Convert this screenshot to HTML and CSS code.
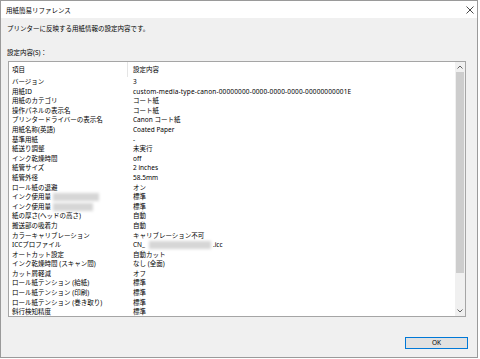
FILE: index.html
```html
<!DOCTYPE html>
<html lang="ja">
<head>
    <meta charset="utf-8">
    <link rel="stylesheet" href="styles.css">
</head>
<body>
    <div class="dialog">
        <div class="titlebar">
            <span class="title">用紙簡易リファレンス</span>
            <svg class="close" width="8" height="8" viewBox="0 0 8 8">
                <path d="M0.5 0.5 L7.5 7.5 M7.5 0.5 L0.5 7.5" stroke="#333" stroke-width="0.9" fill="none" />
            </svg>
        </div>

        <div class="content">
            <p class="desc">プリンターに反映する用紙情報の設定内容です。</p>
            <div class="caption">設定内容(S)：</div>

            <div class="list">
                <div class="rows">
                    <div class="row head"><span>項目</span><span class="val">設定内容</span></div>
                    <div class="row"><span>バージョン</span><span class="val">3</span></div>
                    <div class="row"><span>用紙ID</span><span class="val id">custom-media-type-canon-00000000-0000-0000-0000-00000000001E</span></div>
                    <div class="row"><span>用紙のカテゴリ</span><span class="val">コート紙</span></div>
                    <div class="row"><span>操作パネルの表示名</span><span class="val">コート紙</span></div>
                    <div class="row"><span>プリンタードライバーの表示名</span><span class="val">Canon コート紙</span></div>
                    <div class="row"><span>用紙名称(英語)</span><span class="val">Coated Paper</span></div>
                    <div class="row"><span>基準用紙</span><span class="val">-</span></div>
                    <div class="row"><span>紙送り調整</span><span class="val">未実行</span></div>
                    <div class="row"><span>インク乾燥時間</span><span class="val">off</span></div>
                    <div class="row"><span>紙管サイズ</span><span class="val">2 inches</span></div>
                    <div class="row"><span>紙管外径</span><span class="val">58.5mm</span></div>
                    <div class="row"><span>ロール紙の退避</span><span class="val">オン</span></div>
                    <div class="row"><span>インク使用量<i class="blur w1"></i></span><span class="val">標準</span></div>
                    <div class="row"><span>インク使用量<i class="blur w2"></i></span><span class="val">標準</span></div>
                    <div class="row"><span>紙の厚さ(ヘッドの高さ)</span><span class="val">自動</span></div>
                    <div class="row"><span>搬送部の吸着力</span><span class="val">自動</span></div>
                    <div class="row"><span>カラーキャリブレーション</span><span class="val">キャリブレーション不可</span></div>
                    <div class="row"><span>ICCプロファイル</span><span class="val">CN_<i class="blur w3"></i>.icc</span></div>
                    <div class="row"><span>オートカット設定</span><span class="val">自動カット</span></div>
                    <div class="row"><span>インク乾燥時間 (スキャン間)</span><span class="val">なし (全面)</span></div>
                    <div class="row"><span>カット屑軽減</span><span class="val">オフ</span></div>
                    <div class="row"><span>ロール紙テンション (給紙)</span><span class="val">標準</span></div>
                    <div class="row"><span>ロール紙テンション (印刷)</span><span class="val">標準</span></div>
                    <div class="row"><span>ロール紙テンション (巻き取り)</span><span class="val">標準</span></div>
                    <div class="row"><span>斜行検知精度</span><span class="val">標準</span></div>
                </div>

                <div class="scrollbar">
                    <div class="arrow">
                        <svg width="6" height="4" viewBox="0 0 6 4"><path d="M0.5 3.5 L3 1 L5.5 3.5" stroke="#606060" stroke-width="1" fill="none" /></svg>
                    </div>
                    <div class="track">
                        <div class="thumb"></div>
                    </div>
                    <div class="arrow">
                        <svg width="6" height="4" viewBox="0 0 6 4"><path d="M0.5 0.5 L3 3 L5.5 0.5" stroke="#606060" stroke-width="1" fill="none" /></svg>
                    </div>
                </div>
            </div>

            <div class="footer">
                <button class="ok">OK</button>
            </div>
        </div>
    </div>
</body>
</html>
```

FILE: styles.css
```css
body {
    margin: 0;
    background: #fff;
    font-family: 'Noto Sans', 'Noto Sans CJK JP', sans-serif;
    font-size: 6.5px;
    color: #000;
}

.dialog {
    box-sizing: border-box;
    width: 478px;
    height: 358px;
    border: 1px solid #9a9a9a;
    background: #f0f0f0;
    display: flex;
    flex-direction: column;
}

.titlebar {
    height: 17px;
    background: #fff;
    display: flex;
    align-items: center;
    justify-content: space-between;
    padding: 0 3px 0 5px;
}

.title {
    font-size: 6.5px;
    padding-top: 1px;
}

.content {
    flex: 1;
    display: flex;
    flex-direction: column;
    padding: 6px 9px 0 7px;
}

.desc {
    margin: 0 0 0 -1px;
    line-height: 10px;
}

.caption {
    margin: 14px 0 3px -1px;
    line-height: 10px;
}

.list {
    height: 256px;
    box-sizing: border-box;
    margin-right: 2px;
    border: 1px solid #a5a5a5;
    background: #fff;
    display: flex;
    overflow: hidden;
}

.rows {
    flex: 1;
    overflow: hidden;
}

.row {
    display: grid;
    grid-template-columns: 118px 1fr;
    height: 9.6px;
    line-height: 9.6px;
    white-space: nowrap;
}

.row span {
    padding-left: 3px;
}

.row .val {
    padding-left: 6px;
}

.row .id {
    letter-spacing: 0.15px;
}

.row.head {
    height: 15px;
    line-height: 15px;
}

.row.head .val {
    border-left: 1px solid #e5e5e5;
    padding-left: 5px;
}

.blur {
    display: inline-block;
    height: 8px;
    vertical-align: middle;
    background: #d6d6d6;
    filter: blur(1.5px);
}

.w1 {
    width: 46px;
    margin-left: 2px;
}

.w2 {
    width: 40px;
    margin-left: 2px;
}

.w3 {
    width: 62px;
    margin: 0 2px 0 4px;
}

.scrollbar {
    width: 10px;
    background: #f0f0f0;
    display: flex;
    flex-direction: column;
}

.arrow {
    height: 10px;
    display: flex;
    align-items: center;
    justify-content: center;
}

.track {
    flex: 1;
    padding: 0 1px;
}

.thumb {
    height: 201px;
    background: #cdcdcd;
}

.footer {
    display: flex;
    justify-content: flex-end;
    margin-top: 20px;
}

.ok {
    width: 63px;
    height: 12px;
    padding: 0;
    border: 1px solid #0078d7;
    background: #e1e1e1;
    font-family: 'Noto Sans', 'Noto Sans CJK JP', sans-serif;
    font-size: 6.5px;
    color: #000;
    line-height: 10px;
}
```
